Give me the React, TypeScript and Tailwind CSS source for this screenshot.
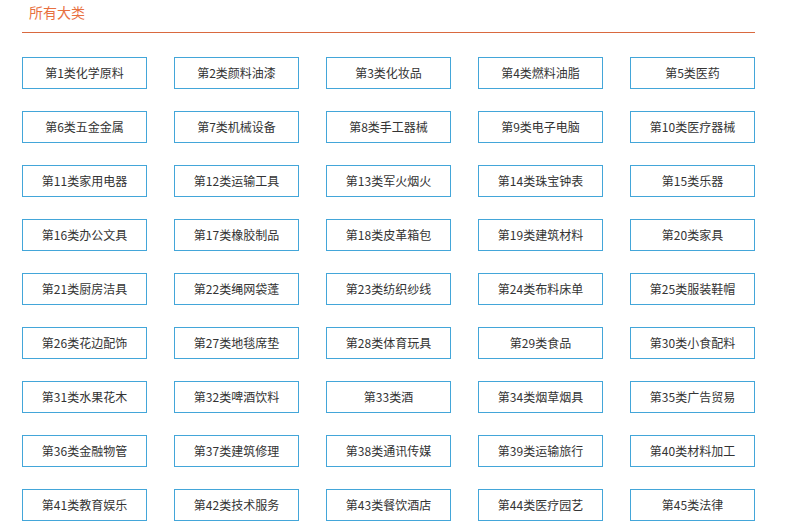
import React from 'react';

const categories: string[] = [
  '化学原料', '颜料油漆', '化妆品', '燃料油脂', '医药',
  '五金金属', '机械设备', '手工器械', '电子电脑', '医疗器械',
  '家用电器', '运输工具', '军火烟火', '珠宝钟表', '乐器',
  '办公文具', '橡胶制品', '皮革箱包', '建筑材料', '家具',
  '厨房洁具', '绳网袋蓬', '纺织纱线', '布料床单', '服装鞋帽',
  '花边配饰', '地毯席垫', '体育玩具', '食品', '小食配料',
  '水果花木', '啤酒饮料', '酒', '烟草烟具', '广告贸易',
  '金融物管', '建筑修理', '通讯传媒', '运输旅行', '材料加工',
  '教育娱乐', '技术服务', '餐饮酒店', '医疗园艺', '法律',
];

export default function App() {
  return (
    <div className="min-h-screen bg-white" style={{ fontFamily: '"Microsoft YaHei", "Noto Sans CJK SC", sans-serif' }}>
      <div className="ml-[22px] w-[733px]">
        <div className="pt-[4px] pb-[12px] pl-[7px] border-b border-[#d9693f] text-[14px] leading-[16px] text-[#e8703f]">
          所有大类
        </div>
        <div className="mt-[24px] grid grid-cols-[repeat(5,125px)] gap-x-[27px] gap-y-[22px]">
          {categories.map((name, i) => (
            <a
              key={name}
              href="#"
              className="flex h-[32px] items-center justify-center border border-[#43a6d9] text-[12px] text-[#333]"
            >
              第{i + 1}类{name}
            </a>
          ))}
        </div>
      </div>
    </div>
  );
}
